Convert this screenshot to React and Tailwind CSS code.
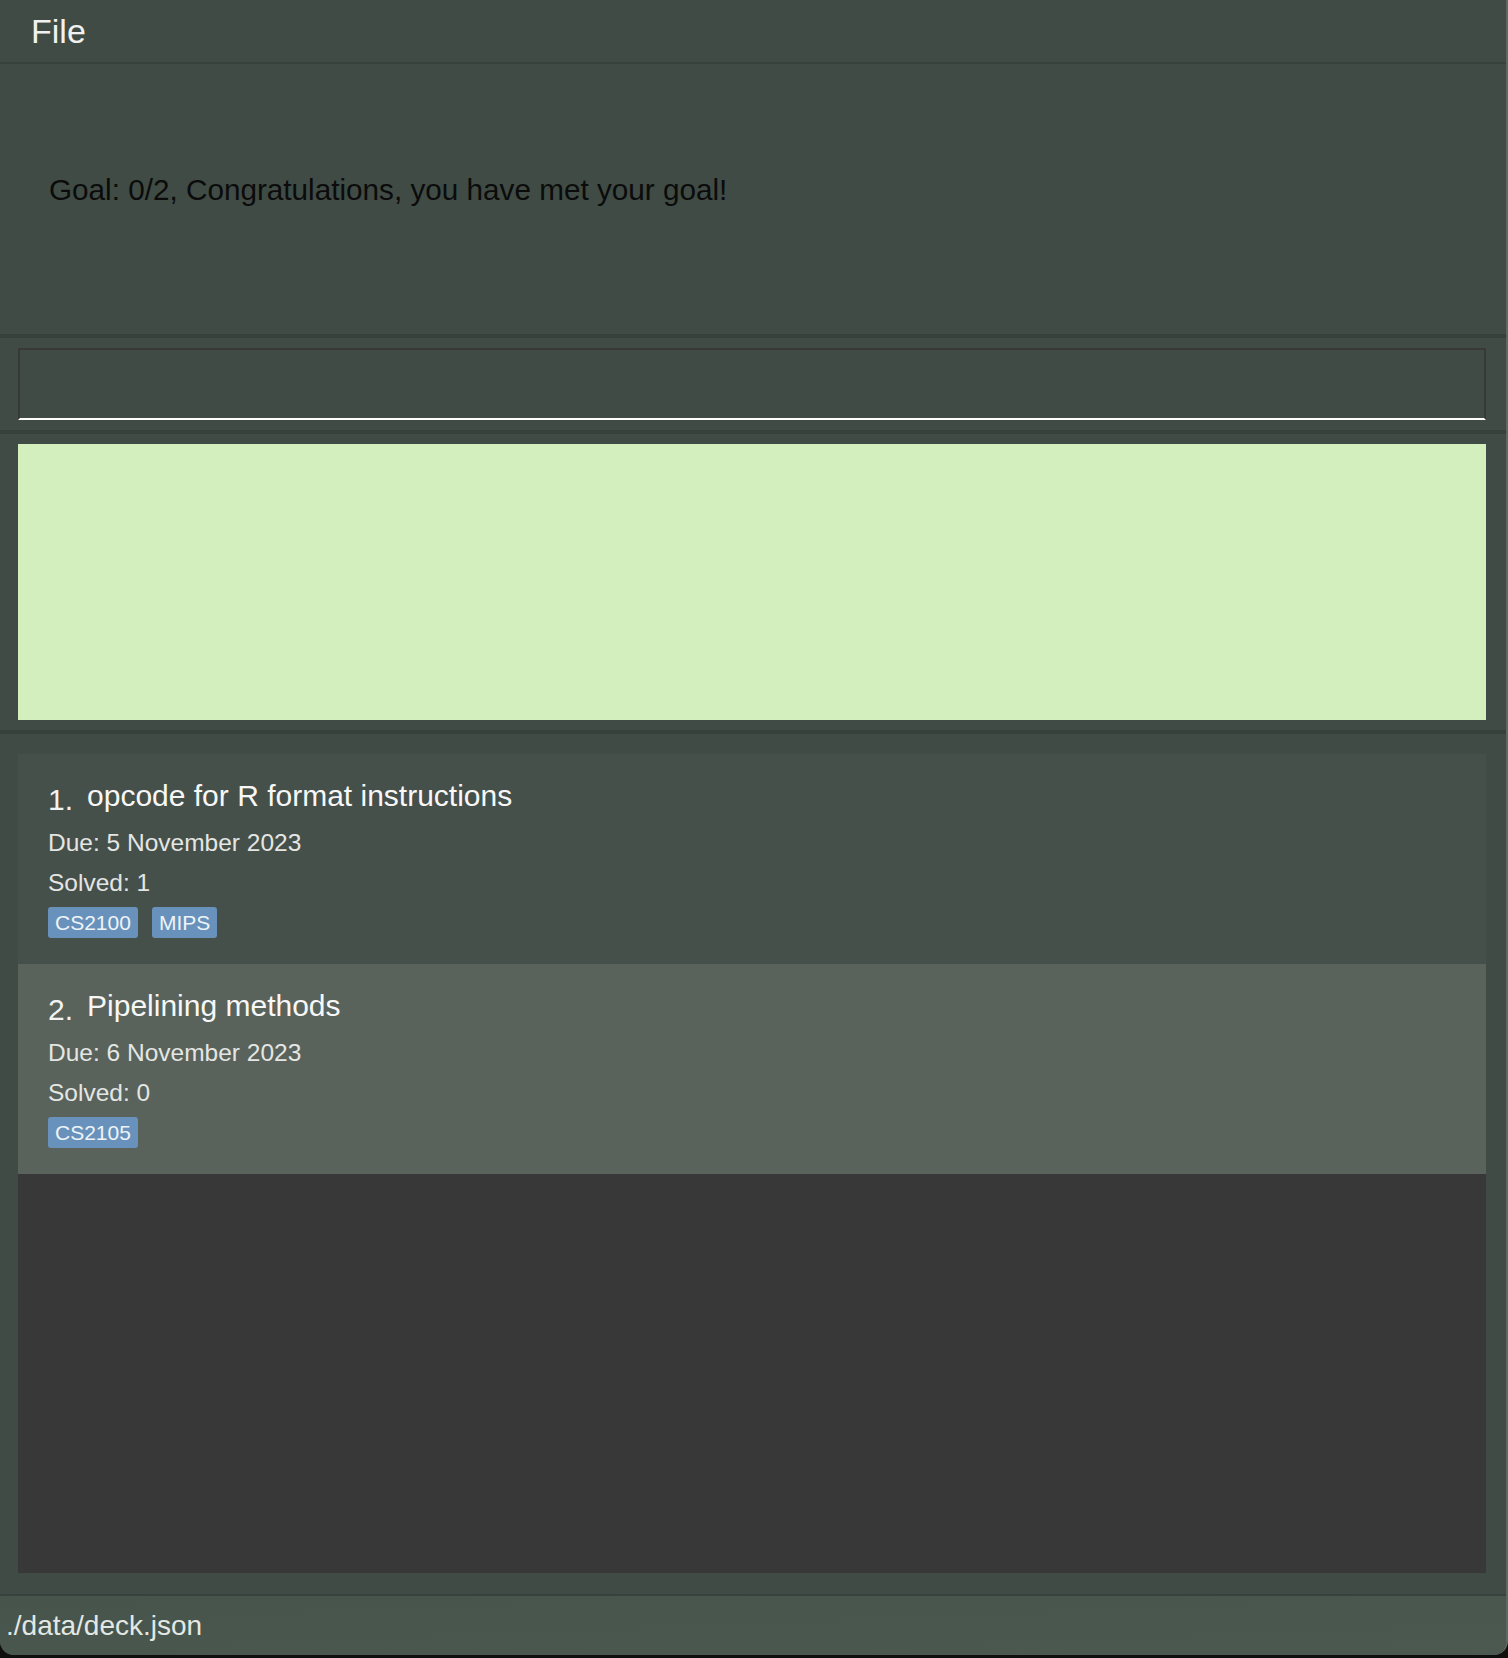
import React from 'react';

const cards = [
  { id: 1, title: 'opcode for R format instructions', due: '5 November 2023', solved: 1, tags: ['CS2100', 'MIPS'] },
  { id: 2, title: 'Pipelining methods', due: '6 November 2023', solved: 0, tags: ['CS2105'] },
];

const Card = ({ card, index }) => (
  <div
    className={`pl-[30px] pt-[24px] pb-[25px] h-[210px] ${
      index % 2 === 0 ? 'bg-[#46504a]' : 'bg-[#59635b]'
    }`}
  >
    <div className="flex items-end h-[36px]">
      <span className="text-[30px] leading-[36px] text-[#f2f2f2] translate-y-[4px]">{index + 1}.</span>
      <span className="ml-[14px] text-[30px] leading-[36px] text-[#f7f7f7]">{card.title}</span>
    </div>
    <div className="mt-[14px] h-[30px] text-[24.5px] leading-[30px] text-[#e4e6e4]">Due: {card.due}</div>
    <div className="mt-[10px] h-[30px] text-[24.5px] leading-[30px] text-[#e4e6e4]">Solved: {card.solved}</div>
    <div className="mt-[9px] flex gap-[14px]">
      {card.tags.map((t) => (
        <span
          key={t}
          className="h-[31px] px-[7px] rounded-[3px] bg-[#6892bb] text-[21px] leading-[31px] text-[#eef3f8]"
        >
          {t}
        </span>
      ))}
    </div>
  </div>
);

const App = () => {
  return (
    <div className="h-[1658px] w-full bg-[#0e0f0e] font-['Liberation_Sans',Arial,sans-serif]">
      <div className="h-[1655px] bg-[#3f4b44] border-r-2 border-[#5f6761] rounded-b-[14px] flex flex-col overflow-hidden">
        {/* Menu bar */}
        <div className="h-[64px] border-b-2 border-[#36423b] flex items-center pl-[31px]">
          <span className="text-[34px] leading-[40px] text-[#f1f1f1]">File</span>
        </div>

        {/* Result display */}
        <div className="h-[274px] border-b-4 border-[#35413a] pl-[49px] pt-[108px]">
          <p className="text-[29.7px] leading-[36px] text-[#0b0b0b]">
            Goal: 0/2, Congratulations, you have met your goal!
          </p>
        </div>

        {/* Command box */}
        <div className="h-[96px] border-b-4 border-[#35413a] pl-[18px] pr-[20px] pt-[10px]">
          <div className="h-[72px] border-2 border-[#383838] border-b-white bg-[#3f4b44]"></div>
        </div>

        {/* Feedback */}
        <div className="h-[300px] border-b-4 border-[#35413a] pl-[18px] pr-[20px] pt-[10px]">
          <div className="h-[276px] bg-[#d3efbe]"></div>
        </div>

        {/* Card list */}
        <div className="flex-1 border-b-2 border-[#36423b] pl-[18px] pr-[20px] pt-[20px] pb-[21px] flex flex-col">
          <div className="flex-1 bg-[#383838] flex flex-col">
            {cards.map((c, i) => (
              <Card key={c.id} card={c} index={i} />
            ))}
          </div>
        </div>

        {/* Status bar */}
        <div className="h-[59px] bg-gradient-to-br from-[#46544b] to-[#4b5951] flex items-center pl-[6px]">
          <span className="text-[28px] leading-[34px] text-[#e3e8e4]">./data/deck.json</span>
        </div>
      </div>
    </div>
  );
};

export default App;
